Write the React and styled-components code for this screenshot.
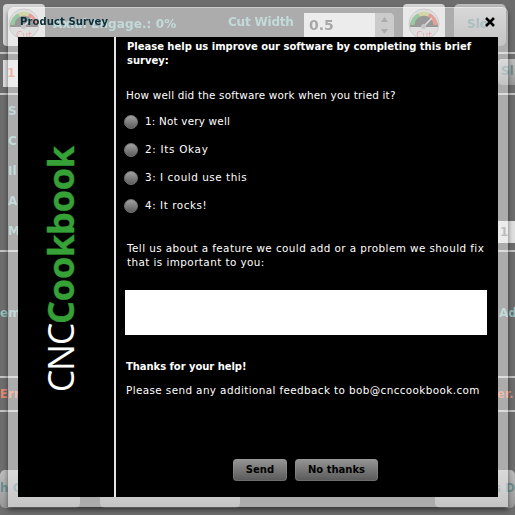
import React from "react";
import styled, { createGlobalStyle } from "styled-components";

const GlobalStyle = createGlobalStyle`
  * { box-sizing: border-box; }
  body { margin: 0; overflow: hidden; background: #6d6d6d; }
  p, h1, h2 { margin: 0; }
  button { font: inherit; padding: 0; border: 0; }
`;

const Screen = styled.main`
  position: relative;
  width: 515px;
  height: 515px;
  overflow: hidden;
  font-family: "DejaVu Sans", sans-serif;
  background: #6d6d6d;
`;

/* Blurred application behind the dialog */
const Backdrop = styled.div`
  display: flex;
  flex-direction: column;
  height: 515px;
  filter: blur(0.7px);
  font-size: 12px;
  line-height: 14px;
  font-weight: bold;
  color: #94c0be;
`;

const Band = styled.div`
  display: flex;
  flex: none;
  justify-content: space-between;
  height: ${(p) => p.$h}px;
  padding: ${(p) => p.$pad || "0"};
  border-bottom: ${(p) => (p.$line ? "2px solid #c2c2c2" : "0")};
`;

const Toolbar = styled.div`
  display: flex;
  flex: none;
  height: 54px;
  padding: 4px 0 0 3px;
  border-bottom: 2px solid #c2c2c2;
`;

const GaugeTile = styled.div`
  flex: none;
  width: 42px;
  height: 42px;
  padding: 4px 4px;
  margin-right: ${(p) => p.$gap}px;
  border-radius: 4px;
  background: #d6d6d6;
`;

const ToolLabel = styled.div`
  flex: none;
  width: ${(p) => p.$w}px;
  padding-top: ${(p) => p.$top}px;
  letter-spacing: ${(p) => p.$track || 0}px;
  white-space: nowrap;
`;

const NumberField = styled.div`
  display: flex;
  flex: none;
  width: 90px;
  height: 32px;
  margin: 9px 9px 0 0;
  background: #dedede;
  border-radius: 0 5px 5px 0;
  color: #666;
  font-size: 14px;
  line-height: 24px;
  padding-left: 5px;
  justify-content: space-between;
`;

const Stepper = styled.div`
  display: flex;
  flex-direction: column;
  align-items: center;
  gap: 7px;
  width: 19px;
  padding-top: 4px;
  border-radius: 0 5px 5px 0;
  background: #a4a4a4;
`;

const GreyButton = styled.div`
  flex: none;
  width: ${(p) => p.$w}px;
  height: ${(p) => p.$h}px;
  margin: ${(p) => p.$m || "0"};
  padding: ${(p) => p.$pad || "0"};
  border-radius: ${(p) => p.$radius || "5px"};
  background: linear-gradient(#bdbdbd, #989898);
  color: #6a8d8e;
  white-space: nowrap;
`;

const SideLabels = styled.div`
  display: flex;
  flex-direction: column;
  justify-content: space-between;
  height: 134px;
  margin: 9px 0 0 8px;
`;

const EdgeField = styled.div`
  flex: none;
  width: ${(p) => p.$w}px;
  height: ${(p) => p.$h}px;
  margin: ${(p) => p.$m};
  padding-left: ${(p) => p.$pl || 4}px;
  line-height: ${(p) => p.$h}px;
  background: #dedede;
  color: ${(p) => p.$color};
`;

const EdgeText = styled.span`
  width: ${(p) => p.$w}px;
  white-space: nowrap;
  color: ${(p) => p.$color || "inherit"};
`;

/* Dialog */
const Dialog = styled.section`
  position: absolute;
  left: 8px;
  top: 7px;
  width: 500px;
  height: 500px;
  display: flex;
  flex-direction: column;
  padding: 0 10px 10px;
  border-top: 1px solid rgba(255, 255, 255, 0.4);
  border-radius: 6px 6px 0 0;
  background: rgba(255, 255, 255, 0.43);
  box-shadow: 0 3px 5px rgba(0, 0, 0, 0.5);
`;

const TitleBar = styled.header`
  display: flex;
  align-items: center;
  justify-content: space-between;
  flex: none;
  height: 29px;
  padding: 0 3px 1px 2px;
`;

const Title = styled.h1`
  font-size: 10px;
  line-height: 14px;
  letter-spacing: 0.1px;
  color: #0b2f3b;
`;

const CloseButton = styled.button`
  display: flex;
  background: none;
`;

const Content = styled.div`
  display: flex;
  flex: 1;
  background: #000;
  color: #fff;
`;

const BrandColumn = styled.aside`
  display: flex;
  align-items: flex-end;
  width: 98px;
  padding: 0 0 105px 24px;
  border-right: 2px solid #e5e5e5;
`;

const Brand = styled.div`
  writing-mode: vertical-rl;
  transform: rotate(180deg);
  font-family: "Open Sans", sans-serif;
  font-size: 36px;
  line-height: 38px;
  letter-spacing: -1.4px;
  white-space: nowrap;
`;

const BrandStrong = styled.b`
  color: #36a136;
  font-weight: 700;
  letter-spacing: -0.2px;
  -webkit-text-stroke: 0.4px #36a136;
`;

const Form = styled.form`
  display: flex;
  flex-direction: column;
  align-items: flex-start;
  width: 382px;
  padding: 3px 0 0 9px;
`;

const Copy = styled.p`
  flex: none;
  font-size: ${(p) => (p.$bold ? 10 : 10.4)}px;
  line-height: 14px;
  font-weight: ${(p) => (p.$bold ? "bold" : "normal")};
  letter-spacing: ${(p) => p.$track || 0}px;
  margin: ${(p) => p.$m || "0"};
  white-space: nowrap;
`;

const Options = styled.div`
  display: flex;
  flex-direction: column;
  gap: 14px;
  margin-top: 13px;
`;

const Option = styled.label`
  display: flex;
  align-items: center;
  gap: 7px;
  height: 14px;
  font-size: 10.4px;
  line-height: 14px;
  letter-spacing: ${(p) => p.$track}px;
`;

const OptionText = styled.span`
  padding-bottom: 2px;
`;

const Radio = styled.span`
  width: 14px;
  height: 14px;
  margin-left: -1px;
  border-radius: 50%;
  background: linear-gradient(#a0a0a0, #5d5d5d);
  border: 1px solid #777;
`;

const Answer = styled.textarea`
  display: block;
  flex: none;
  width: 362px;
  height: 45px;
  margin: 21px 0 0;
  border: 0;
  border-radius: 0;
  resize: none;
  background: #fff;
`;

const Actions = styled.div`
  display: flex;
  gap: 8px;
  margin: 62px 0 0 108px;
`;

const ActionButton = styled.button`
  width: ${(p) => p.$w}px;
  height: 22px;
  border-radius: 4px;
  background: linear-gradient(#969696, #585858);
  box-shadow: inset 0 0 0 1px rgba(160, 160, 160, 0.3);
  color: #000;
  font-size: 10px;
  font-weight: bold;
  line-height: 20px;
  padding-bottom: 1px;
`;

const Gauge = () => (
  <svg width="34" height="34" viewBox="0 0 34 34">
    <circle cx="17" cy="16" r="15" fill="#c6c6c6" stroke="#a5a5a5" />
    <path d="M3 19a14 14 0 0 1 28 0z" fill="#4c4c4c" />
    <path d="M5.5 17A11.5 11.5 0 0 1 12 7" fill="none" stroke="#4ba15c" strokeWidth="4" />
    <path d="M12 7a12 12 0 0 1 10 0" fill="none" stroke="#b4b567" strokeWidth="4" />
    <path d="M22 7a12 12 0 0 1 6.5 10" fill="none" stroke="#d2574a" strokeWidth="4" />
    <path d="m16 19 9-9" stroke="#c9c9c9" strokeWidth="1.5" />
    <circle cx="16.5" cy="18.5" r="2.5" fill="#9a9a9a" />
    <text x="17" y="30" textAnchor="middle" fontSize="9" fontWeight="normal" fill="#d8666b">Cut</text>
  </svg>
);

const StepArrow = ({ down }) => (
  <svg width="7" height="5" viewBox="0 0 7 5">
    <path d={down ? "M0 0h7L3.5 5z" : "M0 5h7L3.5 0z"} fill="#6c6c6c" />
  </svg>
);

const options = [
  ["1: Not very well", 0.2],
  ["2: Its Okay", 0.7],
  ["3: I could use this", 0.54],
  ["4: It rocks!", 0.55],
];

export default function App() {
  return (
    <Screen>
      <GlobalStyle />
      <Backdrop aria-hidden="true">
        <Toolbar>
          <GaugeTile $gap={8}><Gauge /></GaugeTile>
          <ToolLabel $w={175} $top={13} $track={0.1}>Axial Engage.: 0%</ToolLabel>
          <ToolLabel $w={76} $top={11} $track={-0.2}>Cut Width</ToolLabel>
          <NumberField>
            0.5
            <Stepper><StepArrow /><StepArrow down /></Stepper>
          </NumberField>
          <GaugeTile $gap={9}><Gauge /></GaugeTile>
          <GreyButton $w={52} $h={42} $pad="13px 0 0 13px">Slo</GreyButton>
        </Toolbar>
        <Band $h={41} $line>
          <EdgeField $w={15} $h={27} $m="6px 0 0 3px" $color="#dc8168">1</EdgeField>
          <GreyButton $w={18} $h={26} $m="5px 0 0" $pad="5px 0 0 4px" $radius="5px 0 0 5px">Sl</GreyButton>
        </Band>
        <Band $h={157} $line>
          <SideLabels>
            <span>S</span>
            <span>C</span>
            <span>Il</span>
            <span>A</span>
            <span>M</span>
          </SideLabels>
          <EdgeField $w={17} $h={22} $m="126px 0 0" $pl={2} $color="#888">1</EdgeField>
        </Band>
        <Band $h={126} $pad="54px 0 0" $line>
          <EdgeText $w={19}>em</EdgeText>
          <EdgeText $w={16}>Ad</EdgeText>
        </Band>
        <Band $h={34} $pad="9px 0 0" $line>
          <EdgeText $w={19} $color="#e08a72">Err</EdgeText>
          <EdgeText $w={18} $color="#e08a72">er.</EdgeText>
        </Band>
        <Band $h={103} $pad="58px 0 0">
          <GreyButton $w={80} $h={38} $pad="11px 0 0">h C</GreyButton>
          <GreyButton $w={140} $h={38} $m="0 0 0 -175px" />
          <GreyButton $w={80} $h={38} $pad="11px 0 0 59px">s D</GreyButton>
        </Band>
      </Backdrop>
      <Dialog role="dialog" aria-label="Product Survey">
        <TitleBar>
          <Title>Product Survey</Title>
          <CloseButton aria-label="Close">
            <svg width="10" height="10" viewBox="0 0 10 10">
              <path d="m1 1 8 8M9 1 1 9" stroke="#000" strokeWidth="2.5" />
            </svg>
          </CloseButton>
        </TitleBar>
        <Content>
          <BrandColumn>
            <Brand>CNC<BrandStrong>Cookbook</BrandStrong></Brand>
          </BrandColumn>
          <Form onSubmit={(e) => e.preventDefault()}>
            <Copy $bold $m="0 0 0 2px" $track={-0.02}>
              Please help us improve our software by completing this brief<br />survey:
            </Copy>
            <Copy $m="20px 0 0 1px" $track={0.2}>How well did the software work when you tried it?</Copy>
            <Options>
              {options.map(([label, track]) => (
                <Option key={label} $track={track}><Radio /><OptionText>{label}</OptionText></Option>
              ))}
            </Options>
            <Copy $m="28px 0 0 2px" $track={0.43}>
              Tell us about a feature we could add or a problem we should fix<br />that is important to you:
            </Copy>
            <Answer aria-label="Feature or problem" />
            <Copy $bold $m="25px 0 0 1px" $track={-0.05}>Thanks for your help!</Copy>
            <Copy $m="9px 0 0 1px" $track={0.4}>Please send any additional feedback to bob@cnccookbook.com</Copy>
            <Actions>
              <ActionButton $w={54}>Send</ActionButton>
              <ActionButton $w={83}>No thanks</ActionButton>
            </Actions>
          </Form>
        </Content>
      </Dialog>
    </Screen>
  );
}
